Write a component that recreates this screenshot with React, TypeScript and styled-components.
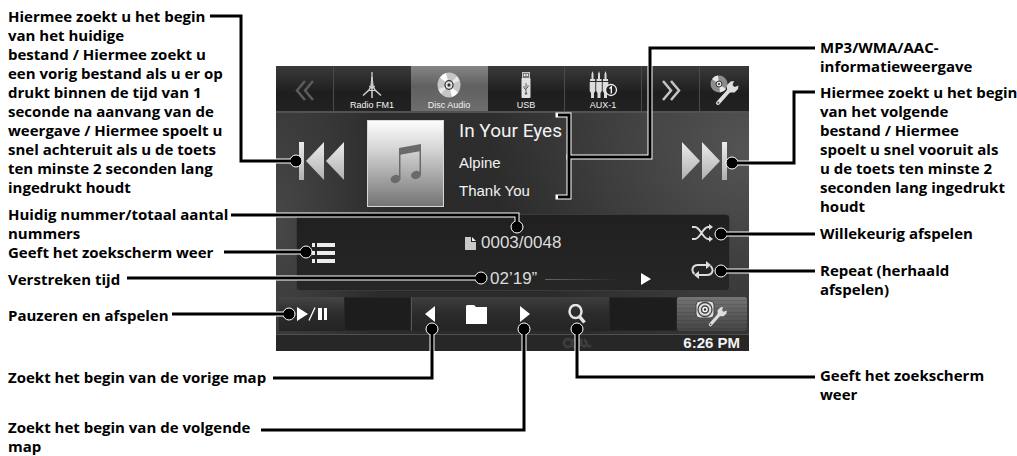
import React from "react";
import styled, { createGlobalStyle } from "styled-components";

const GlobalStyle = createGlobalStyle`
  *, *::before, *::after { box-sizing: border-box; }
  body {
    margin: 0;
    background: #fff;
    color: #000;
    font-family: "Open Sans", "Noto Sans", sans-serif;
    overflow-x: hidden;
  }
  button { font: inherit; color: inherit; cursor: pointer; }
  svg { display: block; }
`;

const Figure = styled.main`
  position: relative;
  display: grid;
  grid-template-columns: 268px 473px minmax(0, 1fr);
  align-items: start;
  padding-left: 8px;
`;

const Labels = styled.ul<{ $top: number; $indent?: number }>`
  display: flex;
  flex-direction: column;
  margin: 0;
  padding: ${(p) => p.$top}px 0 0 ${(p) => p.$indent ?? 0}px;
  list-style: none;
`;

const Label = styled.li<{ $gap?: number }>`
  margin-top: ${(p) => p.$gap ?? 0}px;
  font-size: 15px;
  font-weight: 700;
  line-height: 19px;
  white-space: pre;
`;

const Device = styled.section`
  margin-top: 66px;
  color: #f2f2f2;
  font-family: "Liberation Sans", Arial, sans-serif;
  background:
    radial-gradient(ellipse 260px 230px at 100% 30%, #545454 0%, rgba(80, 80, 80, 0) 100%),
    radial-gradient(ellipse 110px 220px at 0% 55%, #484848 0%, rgba(70, 70, 70, 0) 100%),
    linear-gradient(#303030, #292929 60%, #2c2c2c);
`;

const Tabs = styled.nav`
  display: grid;
  grid-template-columns: 58px repeat(4, minmax(0, 1fr)) 58px 49px;
  height: 47px;
  background: linear-gradient(#3a3a3a, #1e1e1e 60%, #222);
  border-bottom: 2px solid #525252;
`;

const Tab = styled.button<{ $active?: boolean; $divided?: boolean }>`
  display: flex;
  flex-direction: column;
  align-items: center;
  justify-content: center;
  padding: 4px 0 0;
  border: 0;
  border-right: 1px solid ${(p) => (p.$divided ? "#4a4a4a" : "transparent")};
  background: ${(p) => (p.$active ? "linear-gradient(#858585, #606060 45%, #6e6e6e)" : "none")};
`;

const TabIcon = styled.span`
  display: flex;
  align-items: center;
  height: 28px;
`;

const TabName = styled.span`
  font-size: 9px;
  line-height: 12px;
  white-space: nowrap;
`;

const NowPlaying = styled.div`
  display: grid;
  grid-template-columns: 91px 77px minmax(0, 1fr) 91px;
  height: 101px;
`;

const SkipButton = styled.button`
  display: flex;
  align-items: center;
  justify-content: center;
  height: 96px;
  padding: 0;
  border: 0;
  background: none;
`;

const Cover = styled.div`
  display: flex;
  align-items: center;
  justify-content: center;
  height: 87px;
  margin-top: 7px;
  border: 1px solid #d8d8d8;
  background: linear-gradient(#fdfdfd, #d2d2d2 35%, #747474);
`;

const TrackInfo = styled.div`
  padding-left: 15px;
  font-size: 15px;
  line-height: 28px;
  white-space: nowrap;
`;

const Title = styled.h1`
  margin: 0;
  font-family: Roboto, "Liberation Sans", sans-serif;
  font-size: 19px;
  font-weight: 400;
  line-height: 36px;
`;

const Status = styled.div`
  display: grid;
  grid-template-columns: 52px minmax(0, 1fr) 52px;
  height: 77px;
  margin: 0 19px 6px 20px;
  border: 1px solid #3a3a3a;
  border-radius: 4px;
  background: linear-gradient(#202020, #262626);
`;

const PanelButton = styled.button`
  display: flex;
  align-items: center;
  justify-content: center;
  height: 24px;
  padding: 0;
  border: 0;
  background: none;
`;

const ListCell = styled.div`
  display: grid;
  align-content: center;
`;

const Modes = styled.div`
  display: flex;
  flex-direction: column;
  gap: 13px;
  padding-top: 6px;
`;

const Counters = styled.div`
  display: flex;
  flex-direction: column;
  gap: 12px;
  padding-top: 16px;
`;

const Counter = styled.div<{ $indent: number }>`
  display: flex;
  align-items: center;
  gap: 5px;
  height: 24px;
  padding-left: ${(p) => p.$indent}px;
  font-size: 17px;
  line-height: 24px;
  color: #dcdcdc;
  white-space: nowrap;
`;

const Progress = styled.span`
  width: 74px;
  height: 1px;
  margin: 0 17px 0 3px;
  background: linear-gradient(90deg, #666, rgba(100, 100, 100, 0));
`;

const Controls = styled.div`
  display: grid;
  grid-template-columns: 65px minmax(0, 67fr) minmax(0, 198fr) minmax(0, 68fr) 70px;
  height: 34px;
  margin: 0 2px 3px 3px;
  background: #1d1d1d;
`;

const ControlButton = styled.button<{ $raised?: boolean }>`
  display: flex;
  align-items: center;
  justify-content: center;
  padding: 0;
  border: 0;
  background: ${(p) => (p.$raised ? "linear-gradient(#454545, #2c2c2c 50%, #242424)" : "none")};
`;

const ControlGroup = styled.div`
  display: grid;
  grid-template-columns: 36px minmax(0, 1fr) 39px 65px;
  border-left: 1px solid #555;
  background: linear-gradient(#3e3e3e, #2b2b2b 50%, #242424);
`;

const EmptySlot = styled.span`
  border: 1px solid #262626;
`;

const SourceSetup = styled(ControlButton)`
  border-radius: 2px;
  background:
    repeating-linear-gradient(rgba(30, 30, 30, 0) 0 3px, rgba(30, 30, 30, 0.15) 3px 4px),
    linear-gradient(#747474, #444);
`;

const Footer = styled.footer`
  display: flex;
  align-items: center;
  justify-content: flex-end;
  height: 17px;
  padding-right: 9px;
  border-top: 1px solid #505050;
  background: #272727;
`;

const Clock = styled.time`
  font-size: 15px;
  font-weight: 700;
  line-height: 16px;
`;

const Emblem = styled.span`
  margin-right: 91px;
`;

const Leaders = styled.svg`
  position: absolute;
  top: 0;
  left: 0;
  pointer-events: none;
`;

const leaderPaths = [
  "M210 16H241V161H297",
  "M231 215H517V227",
  "M224 252H306",
  "M127 278H481",
  "M172 314H289",
  "M273 378H432V329",
  "M261 430H524V329",
  "M815 377H577V329",
  "M815 48H650V157H569",
  "M558 115H569V197H558",
  "M815 92H794V163H732",
  "M815 234H721",
  "M815 271H721",
];

const leaderDots = [
  [296, 161], [517, 227], [306, 252], [481, 278], [289, 314], [432, 329],
  [524, 329], [577, 329], [732, 163], [721, 234], [721, 271],
];

const Wrench = ({ x, y, scale = 1 }: { x: number; y: number; scale?: number }) => (
  <g transform={`translate(${x} ${y}) scale(${scale})`}>
    <path d="M3 22L15 8.500" stroke="#dedede" strokeWidth="4" strokeLinecap="round" />
    <path d="M12 9L12 4L15.500 0.500L19 0L17.500 4L19.500 6L23.500 4.500L23 8L19.500 11.500L14.500 11.500Z" fill="#dedede" />
    <circle cx="3.300" cy="21.700" r="1" fill="#444" />
  </g>
);

const Chevrons = ({ dim, flip }: { dim?: boolean; flip?: boolean }) => (
  <svg width="20" height="21" viewBox="0 0 20 21" fill="none" stroke={dim ? "#5c5c5c" : "#c4c4c4"} strokeWidth="2.500">
    {flip ? <path d="M10 1L2 10.500L10 20M18 1L10 10.500L18 20" /> : <path d="M2 1L10 10.500L2 20M10 1L18 10.500L10 20" />}
  </svg>
);

const SkipIcon = ({ back }: { back?: boolean }) => (
  <svg width="46" height="40" viewBox="0 0 46 40">
    <defs>
      <linearGradient id={back ? "skb" : "skf"} x1="0" y1="0" x2="0" y2="1">
        <stop offset="0" stopColor="#ececec" />
        <stop offset="1" stopColor="#b0b0b0" />
      </linearGradient>
    </defs>
    <g fill={`url(#${back ? "skb" : "skf"})`} transform={back ? "translate(46 0) scale(-1 1)" : undefined}>
      <path d="M1 1L19 20L1 39Z" />
      <path d="M21 1L39 20L21 39Z" />
      <rect x="41" y="1" width="5" height="38" />
    </g>
  </svg>
);

const Triangle = ({ left, w = 10, h = 16 }: { left?: boolean; w?: number; h?: number }) => (
  <svg width={w} height={h} viewBox="0 0 10 16" preserveAspectRatio="none" fill="#fff">
    <path d={left ? "M10 0V16L0 8Z" : "M0 0V16L10 8Z"} />
  </svg>
);

const RadioIcon = () => (
  <svg width="22" height="28" viewBox="0 0 22 28" fill="none" stroke="#cfcfcf">
    <path d="M11 1V10" strokeWidth="1.300" />
    <path d="M11 6L9.500 17H12.500Z" fill="#c4c4c4" strokeWidth="1" />
    <path d="M9.500 16L8 19L2 24.500M12.500 16L14 19L20 24.500M11 17V27" strokeWidth="1.500" />
    <path d="M7.500 19.500H14.500M8 15L11 17L14 15" strokeWidth="1" />
  </svg>
);

const DiscIcon = () => (
  <svg width="24" height="26" viewBox="0 0 24 24" preserveAspectRatio="none">
    <circle cx="12" cy="12" r="11.500" fill="#c6c6c6" />
    <path d="M12 12L3 5A11.500 11.500 0 0 1 9 .9ZM12 12L21 19A11.500 11.500 0 0 1 15 23.100Z" fill="#fff" />
    <path d="M12 12L20 4A11.500 11.500 0 0 1 22.500 8ZM12 12L4 20A11.500 11.500 0 0 1 1.500 16Z" fill="#e8e8e8" />
    <circle cx="12" cy="12" r="4" fill="#e4e4e4" stroke="#333" strokeWidth="1.200" />
    <circle cx="12" cy="12" r="1.600" fill="#333" />
  </svg>
);

const UsbIcon = () => (
  <svg width="10" height="26" viewBox="0 0 10 26">
    <rect x="1.500" y="0.500" width="7" height="6" fill="#777" stroke="#c8c8c8" />
    <rect x="3" y="2" width="1.500" height="2" fill="#eee" />
    <rect x="5.500" y="2" width="1.500" height="2" fill="#eee" />
    <rect x="0.500" y="6" width="9" height="20" rx="1" fill="#e2e2e2" />
    <path d="M5 11V21M5 18L3 16V14M5 17L7 15V13" stroke="#666" fill="none" />
    <circle cx="5" cy="21.500" r="1.200" fill="#666" />
  </svg>
);

const AuxIcon = () => (
  <svg width="30" height="28" viewBox="0 0 30 28">
    {[2, 8.500, 15].map((x) => (
      <g key={x} fill="#dcdcdc">
        <path d={`M${x + 1.500} 3L${x + 2.500} 0L${x + 3.500} 3V8H${x + 1.500}Z`} />
        <rect x={x} y="8" width="5" height="2" />
        <path d={`M${x - 0.300} 11H${x + 5.300}V20L${x + 4} 22V27H${x + 1}V22L${x - 0.300} 20Z`} />
      </g>
    ))}
    <circle cx="23" cy="19" r="5.500" fill="#222" stroke="#eee" strokeWidth="1.300" />
    <path d="M21.500 17.500L23.300 16V22.500" stroke="#fff" strokeWidth="1.300" fill="none" />
  </svg>
);

const NoteIcon = () => (
  <svg width="32" height="41" viewBox="0 0 32 41" fill="#6a6a6a">
    <path d="M9 5L31 1V8L9 12Z" />
    <path d="M9 5H10.500V36H9ZM29.500 2H31V31H29.500Z" />
    <ellipse cx="5.500" cy="36" rx="5" ry="4" transform="rotate(-20 5.500 36)" />
    <ellipse cx="26" cy="32" rx="5" ry="4" transform="rotate(-20 26 32)" />
  </svg>
);

export default function App() {
  return (
    <>
      <GlobalStyle />
      <Figure>
        <Labels $top={7}>
          <Label>{"Hiermee zoekt u het begin\nvan het huidige\nbestand / Hiermee zoekt u\neen vorig bestand als u er op\ndrukt binnen de tijd van 1\nseconde na aanvang van de\nweergave / Hiermee spoelt u\nsnel achteruit als u de toets\nten minste 2 seconden lang\ningedrukt houdt"}</Label>
          <Label $gap={8}>{"Huidig nummer/totaal aantal\nnummers"}</Label>
          <Label>Geeft het zoekscherm weer</Label>
          <Label $gap={8}>Verstreken tijd</Label>
          <Label $gap={17}>Pauzeren en afspelen</Label>
          <Label $gap={43}>Zoekt het begin van de vorige map</Label>
          <Label $gap={31}>{"Zoekt het begin van de volgende\nmap"}</Label>
        </Labels>

        <Device aria-label="Disc Audio">
          <Tabs>
            <Tab $divided aria-label="Vorige bronnen"><Chevrons dim flip /></Tab>
            <Tab><TabIcon><RadioIcon /></TabIcon><TabName>Radio FM1</TabName></Tab>
            <Tab $active><TabIcon><DiscIcon /></TabIcon><TabName>Disc Audio</TabName></Tab>
            <Tab $divided><TabIcon><UsbIcon /></TabIcon><TabName>USB</TabName></Tab>
            <Tab $divided><TabIcon><AuxIcon /></TabIcon><TabName>AUX-1</TabName></Tab>
            <Tab $divided aria-label="Volgende bronnen"><Chevrons /></Tab>
            <Tab aria-label="Disc instellen">
              <svg width="32" height="34" viewBox="0 0 32 34">
                <circle cx="11" cy="10" r="8.500" fill="#8c8c8c" />
                <path d="M11 10L4 5A8.500 8.500 0 0 1 10 1.500ZM11 10L18 15A8.500 8.500 0 0 1 12 18.500Z" fill="#e8e8e8" />
                <circle cx="11" cy="10" r="3" fill="#ddd" stroke="#333" />
                <circle cx="11" cy="10" r="1" fill="#333" />
                <Wrench x={7} y={7} />
              </svg>
            </Tab>
          </Tabs>

          <NowPlaying>
            <SkipButton aria-label="Vorige"><SkipIcon back /></SkipButton>
            <Cover><NoteIcon /></Cover>
            <TrackInfo>
              <Title>In Your Eyes</Title>
              <div>Alpine</div>
              <div>Thank You</div>
            </TrackInfo>
            <SkipButton aria-label="Volgende"><SkipIcon /></SkipButton>
          </NowPlaying>

          <Status>
            <ListCell>
              <PanelButton aria-label="Zoekscherm">
                <svg width="26" height="22" viewBox="0 0 26 22" fill="#ececec">
                  <path d="M2 1H5V5H2ZM7 1H25V5H7ZM2 9H5V13H2ZM7 9H25V13H7ZM2 17H5V21H2ZM7 17H25V21H7Z" />
                </svg>
              </PanelButton>
            </ListCell>
            <Counters>
              <Counter $indent={116}>
                <svg width="11" height="13" viewBox="0 0 11 13">
                  <path d="M0 0H6V5H11V13H0Z" fill="#c8c8c8" />
                  <path d="M7 0L11 4H7Z" fill="#eee" />
                </svg>
                <span>0003/0048</span>
              </Counter>
              <Counter $indent={141}>
                <time>02’19”</time>
                <Progress />
                <Triangle w={10} h={12} />
              </Counter>
            </Counters>
            <Modes>
              <PanelButton aria-label="Willekeurig afspelen">
                <svg width="24" height="18" viewBox="0 0 24 18" fill="none" stroke="#dcdcdc" strokeWidth="2">
                  <path d="M1 3H4C9 3 12 15 17 15H20M1 15H4C9 15 12 3 17 3H20" />
                  <path d="M18 0L22 3L18 6ZM18 12L22 15L18 18Z" fill="#dcdcdc" stroke="none" />
                </svg>
              </PanelButton>
              <PanelButton aria-label="Herhaald afspelen">
                <svg width="24" height="18" viewBox="0 0 24 18" fill="none" stroke="#dcdcdc" strokeWidth="2">
                  <path d="M3.500 13C0 10 1 4 7 4H17M19.500 5C23 8 22 14 16 14H7" />
                  <path d="M15 0L20 4L15 8ZM8 10L3 14L8 18Z" fill="#dcdcdc" stroke="none" />
                </svg>
              </PanelButton>
            </Modes>
          </Status>

          <Controls>
            <ControlButton $raised aria-label="Afspelen of pauzeren">
              <svg width="32" height="14" viewBox="0 0 32 14" fill="#fff">
                <path d="M1 0L12 7L1 14ZM22 1H26V13H22ZM28 1H31V13H28Z" />
                <path d="M13 13.500L19 0.500" stroke="#fff" strokeWidth="1.300" />
              </svg>
            </ControlButton>
            <EmptySlot />
            <ControlGroup>
              <ControlButton aria-label="Vorige map"><Triangle left /></ControlButton>
              <ControlButton aria-label="Map">
                <svg width="22" height="19" viewBox="0 0 22 19" fill="#fff">
                  <path d="M1 0H8L10 2H21V19H0V1Z" />
                </svg>
              </ControlButton>
              <ControlButton aria-label="Volgende map"><Triangle /></ControlButton>
              <ControlButton aria-label="Zoeken">
                <svg width="18" height="20" viewBox="0 0 18 20" fill="none" stroke="#e4e4e4">
                  <ellipse cx="7.500" cy="7.500" rx="6" ry="6.500" strokeWidth="2.500" />
                  <path d="M11.500 12.500L16.500 18.500" strokeWidth="3.500" />
                </svg>
              </ControlButton>
            </ControlGroup>
            <EmptySlot />
            <SourceSetup aria-label="Geluid instellen">
              <svg width="34" height="28" viewBox="0 0 34 28">
                <rect x="1" y="1" width="18" height="17" rx="4" fill="#ddd" stroke="#444" />
                <circle cx="10" cy="9.500" r="7" fill="#ddd" stroke="#444" strokeWidth="1.300" />
                <circle cx="10" cy="9.500" r="3.500" fill="#fff" stroke="#444" strokeWidth="1.500" />
                <circle cx="10" cy="9.500" r="1.300" fill="#333" />
                <Wrench x={13} y={7} scale={0.8} />
              </svg>
            </SourceSetup>
          </Controls>

          <Footer>
            <Emblem>
              <svg width="30" height="12" viewBox="0 0 30 12" fill="none" stroke="#3c3c3c" strokeWidth="3">
                <ellipse cx="6" cy="6" rx="4" ry="4" />
                <ellipse cx="14" cy="6" rx="4" ry="4" />
                <path d="M20 2C18 6 20 10 23 9C26 8 24 3 22 3M25 8L29 10" />
              </svg>
            </Emblem>
            <Clock>6:26 PM</Clock>
          </Footer>
        </Device>

        <Labels $top={38} $indent={71}>
          <Label>{"MP3/WMA/AAC-\ninformatieweergave"}</Label>
          <Label $gap={7}>{"Hiermee zoekt u het begin\nvan het volgende\nbestand / Hiermee\nspoelt u snel vooruit als\nu de toets ten minste 2\nseconden lang ingedrukt\nhoudt"}</Label>
          <Label $gap={8}>Willekeurig afspelen</Label>
          <Label $gap={18}>{"Repeat (herhaald\nafspelen)"}</Label>
          <Label $gap={67}>{"Geeft het zoekscherm\nweer"}</Label>
        </Labels>

        <Leaders width="1017" height="456" viewBox="0 0 1017 456" fill="none" aria-hidden="true">
          {leaderPaths.map((d) => (
            <path key={`${d}-edge`} d={d} stroke="#fff" strokeWidth="5" strokeLinecap="square" />
          ))}
          {leaderDots.map(([x, y]) => (
            <circle key={`${x}-${y}`} cx={x} cy={y} r="6" fill="#000" stroke="#fff" />
          ))}
          {leaderPaths.map((d) => (
            <path key={d} d={d} stroke="#000" strokeWidth="3" />
          ))}
        </Leaders>
      </Figure>
    </>
  );
}
